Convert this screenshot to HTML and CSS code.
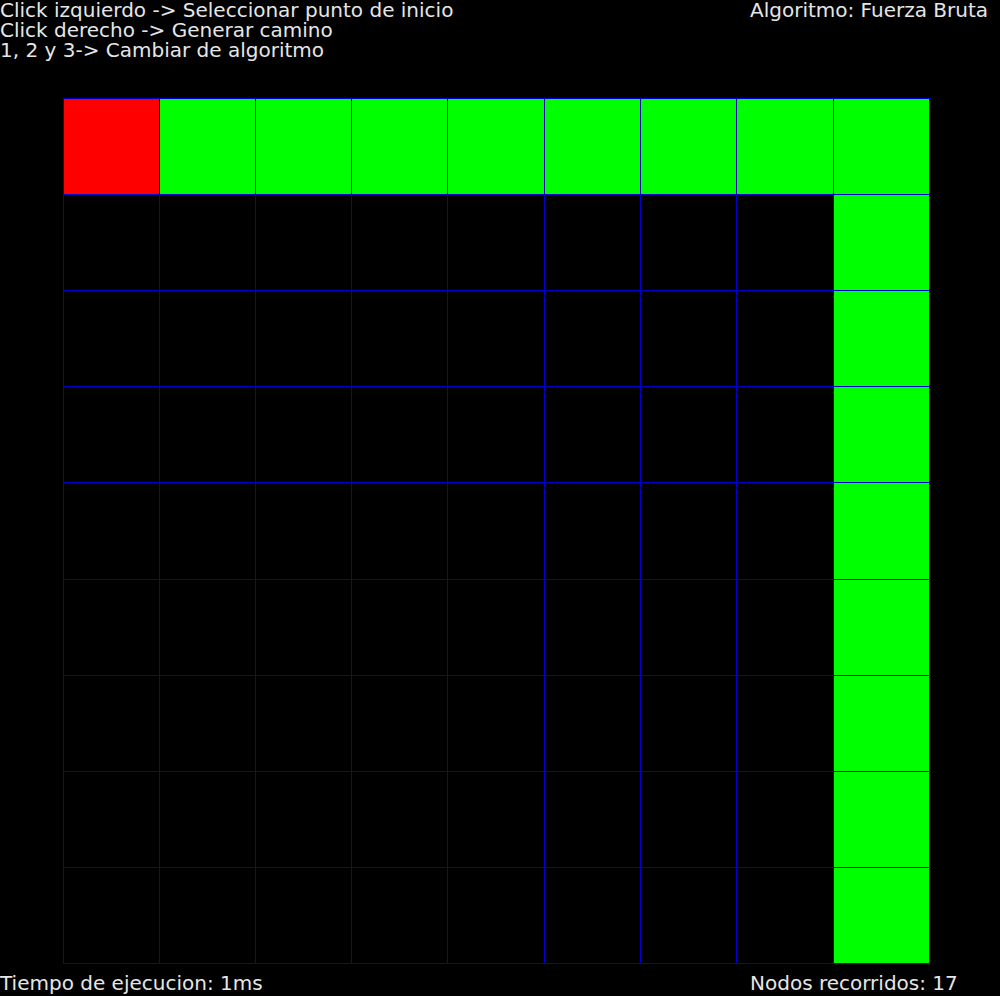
FILE: index.html
```html
<!DOCTYPE html>
<html lang="es">
<head>
<meta charset="utf-8">
<title>Pathfinding</title>
<link rel="stylesheet" href="styles.css">
</head>
<body>
<div class="screen">
  <header class="top">
    <div class="help">
      <div class="line">Click izquierdo -&gt; Seleccionar punto de inicio</div>
      <div class="line">Click derecho -&gt; Generar camino</div>
      <div class="line">1, 2 y 3-&gt; Cambiar de algoritmo</div>
    </div>
    <div class="side">
      <div class="line">Algoritmo: Fuerza Bruta</div>
    </div>
  </header>
  <main class="board">
    <div class="grid">
      <div class="cell start"></div><div class="cell path"></div><div class="cell path"></div><div class="cell path"></div><div class="cell path"></div><div class="cell path"></div><div class="cell path"></div><div class="cell path"></div><div class="cell path"></div>
      <div class="cell"></div><div class="cell"></div><div class="cell"></div><div class="cell"></div><div class="cell"></div><div class="cell"></div><div class="cell"></div><div class="cell"></div><div class="cell path"></div>
      <div class="cell"></div><div class="cell"></div><div class="cell"></div><div class="cell"></div><div class="cell"></div><div class="cell"></div><div class="cell"></div><div class="cell"></div><div class="cell path"></div>
      <div class="cell"></div><div class="cell"></div><div class="cell"></div><div class="cell"></div><div class="cell"></div><div class="cell"></div><div class="cell"></div><div class="cell"></div><div class="cell path"></div>
      <div class="cell"></div><div class="cell"></div><div class="cell"></div><div class="cell"></div><div class="cell"></div><div class="cell"></div><div class="cell"></div><div class="cell"></div><div class="cell path"></div>
      <div class="cell"></div><div class="cell"></div><div class="cell"></div><div class="cell"></div><div class="cell"></div><div class="cell"></div><div class="cell"></div><div class="cell"></div><div class="cell path"></div>
      <div class="cell"></div><div class="cell"></div><div class="cell"></div><div class="cell"></div><div class="cell"></div><div class="cell"></div><div class="cell"></div><div class="cell"></div><div class="cell path"></div>
      <div class="cell"></div><div class="cell"></div><div class="cell"></div><div class="cell"></div><div class="cell"></div><div class="cell"></div><div class="cell"></div><div class="cell"></div><div class="cell path"></div>
      <div class="cell"></div><div class="cell"></div><div class="cell"></div><div class="cell"></div><div class="cell"></div><div class="cell"></div><div class="cell"></div><div class="cell"></div><div class="cell path"></div>
    </div>
  </main>
  <footer class="bottom">
    <div class="help">
      <div class="line">Tiempo de ejecucion: 1ms</div>
    </div>
    <div class="side">
      <div class="line">Nodos recorridos: 17</div>
    </div>
  </footer>
</div>
</body>
</html>
```

FILE: styles.css
```css
html, body {
  margin: 0;
  padding: 0;
  background: #000;
}

.screen {
  width: 1000px;
  height: 996px;
  background: #000;
  color: #e6e6e6;
  font-family: "DejaVu Sans", Verdana, sans-serif;
  font-size: 20px;
  overflow: hidden;
}

.line {
  height: 20px;
  line-height: 20px;
  white-space: nowrap;
}

.top {
  display: flex;
  height: 98px;
}

.help {
  width: 750px;
}

.side {
  flex: 1;
}

.board {
  padding-left: 63px;
}

.grid {
  display: grid;
  width: 867px;
  grid-template-columns: 96px 96px 96px 96px 97px 96px 96px 97px 96px;
  grid-template-rows: 96px 96px 96px 96px 97px 96px 96px 96px 96px;
  border-left: 1px solid #0000c8;
  border-top: 1px solid #0000c8;
}

.cell {
  box-sizing: border-box;
  background: #000;
  border-right: 1px solid #0000c8;
  border-bottom: 1px solid #0000c8;
}

.cell.start {
  background-color: #ff0000;
}

.cell.path {
  background-color: #00ff00;
}

.bottom {
  display: flex;
  padding-top: 9px;
}
```
